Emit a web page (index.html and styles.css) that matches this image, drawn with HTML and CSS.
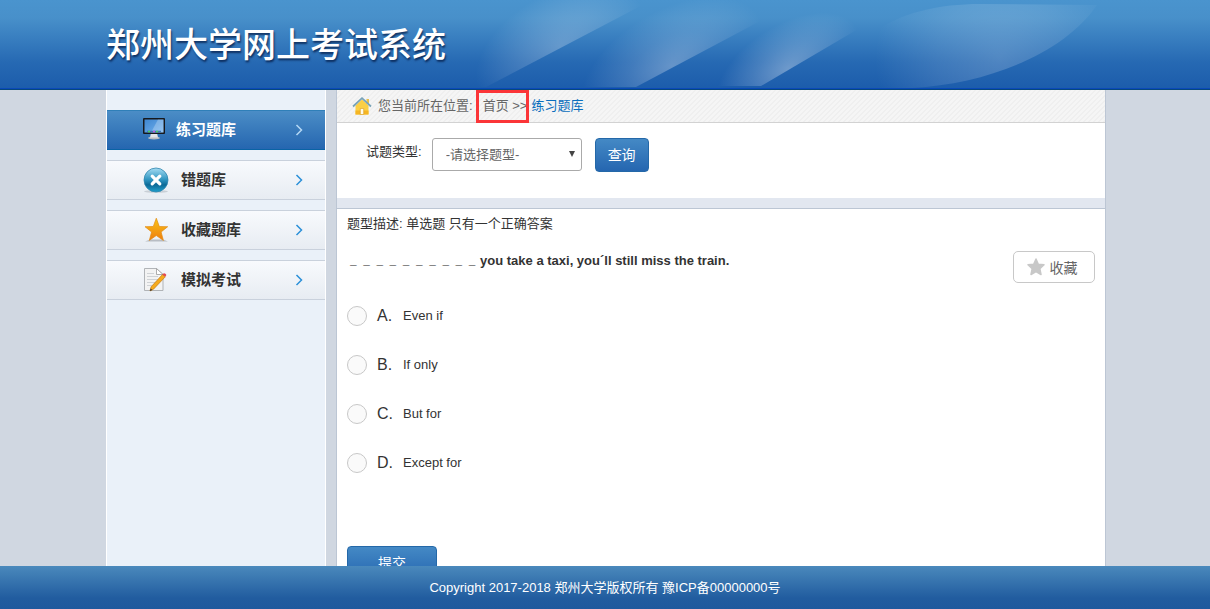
FILE: index.html
```
<!DOCTYPE html>
<html lang="zh-CN">
<head>
  <meta charset="UTF-8">
  <meta name="viewport" content="width=device-width, initial-scale=1.0">
  <title>郑州大学网上考试系统</title>
  <link rel="stylesheet" href="styles.css">
</head>
<body>
  <header class="header">
    <div class="wrap header-inner">
      <h1 class="title">郑州大学网上考试系统</h1>
      <svg class="header-art" width="640" height="88" viewBox="470 0 640 88" aria-hidden="true">
        <defs>
          <radialGradient id="beam1" gradientUnits="userSpaceOnUse" cx="0" cy="0" r="1" gradientTransform="translate(560 47) rotate(-30) scale(92 54)">
            <stop offset="0" stop-color="#fff" stop-opacity=".25"/>
            <stop offset=".5" stop-color="#fff" stop-opacity=".13"/>
            <stop offset="1" stop-color="#fff" stop-opacity="0"/>
          </radialGradient>
          <radialGradient id="beam2" gradientUnits="userSpaceOnUse" cx="0" cy="0" r="1" gradientTransform="translate(672 66) rotate(-30) scale(100 56)">
            <stop offset="0" stop-color="#fff" stop-opacity=".3"/>
            <stop offset=".5" stop-color="#fff" stop-opacity=".13"/>
            <stop offset="1" stop-color="#fff" stop-opacity="0"/>
          </radialGradient>
          <radialGradient id="beam3" gradientUnits="userSpaceOnUse" cx="0" cy="0" r="1" gradientTransform="translate(788 69) rotate(-32) scale(80 44)">
            <stop offset="0" stop-color="#fff" stop-opacity=".34"/>
            <stop offset=".5" stop-color="#fff" stop-opacity=".16"/>
            <stop offset="1" stop-color="#fff" stop-opacity="0"/>
          </radialGradient>
          <radialGradient id="leaf" gradientUnits="userSpaceOnUse" cx="1000" cy="58" r="125">
            <stop offset="0" stop-color="#fff" stop-opacity=".19"/>
            <stop offset=".5" stop-color="#fff" stop-opacity=".11"/>
            <stop offset="1" stop-color="#fff" stop-opacity="0"/>
          </radialGradient>
        </defs>
        <path fill="url(#beam1)" d="M470 87H486L652 0H470z"/>
        <path fill="url(#beam2)" d="M580 87H636L800 0H580z"/>
        <path fill="url(#beam3)" d="M715 86H761L904 2H715z"/>
        <path fill="url(#leaf)" d="M870 35C900 12 940 4 980 4L1097 5C1065 52 990 84 912 88H870z"/>
      </svg>
    </div>
  </header>

  <main class="main">
    <div class="wrap columns">
      <nav class="sidebar">
        <a class="menu-item active" href="#">
          <svg class="menu-icon" width="26" height="26" viewBox="0 0 26 26" aria-hidden="true">
            <defs>
              <linearGradient id="screen" x1="0" y1="0" x2="1" y2="1">
                <stop offset="0" stop-color="#3f86d0"/>
                <stop offset="1" stop-color="#72b2ef"/>
              </linearGradient>
            </defs>
            <ellipse cx="13" cy="21" rx="6" ry="1.400" fill="#b9bdc2"/>
            <path fill="#e3e5e8" d="M10 16h6l1 4.500H9z"/>
            <rect x="2" y="1" width="22" height="16" rx="1" fill="#17191d"/>
            <rect x="3.500" y="2.500" width="19" height="13" fill="url(#screen)"/>
            <path fill="#fff" opacity=".25" d="M17 2.500h5.500v13H10z"/>
            <path stroke="#3f78b8" stroke-width="1.500" d="M6 14.500h14"/>
            <path stroke="#4dd15c" stroke-width="1.500" d="M7 14.500h2m6 0h2"/>
            <path stroke="#c35bdc" stroke-width="1.500" d="M12 14.500h2"/>
          </svg>
          <span class="menu-text">练习题库</span>
          <svg class="menu-arrow" width="8" height="12" viewBox="0 0 8 12" aria-hidden="true"><path d="M1.500 1L6.500 6l-5 5"/></svg>
        </a>
        <a class="menu-item" href="#">
          <svg class="menu-icon" width="26" height="26" viewBox="0 0 26 26" aria-hidden="true">
            <defs>
              <linearGradient id="ball" x1="0" y1="0" x2="0" y2="1">
                <stop offset="0" stop-color="#a5dcf3"/>
                <stop offset=".5" stop-color="#2c93bf"/>
                <stop offset=".7" stop-color="#0d6a97"/>
                <stop offset="1" stop-color="#1fa0cd"/>
              </linearGradient>
            </defs>
            <ellipse cx="13" cy="24.500" rx="12" ry="1.300" fill="#c9cfd6"/>
            <circle cx="13" cy="13" r="12" fill="url(#ball)" stroke="#3187ae" stroke-width=".8"/>
            <path stroke="#fff" stroke-width="3.200" stroke-linecap="round" d="M9.200 9.200l7.600 7.600m0-7.600l-7.600 7.600"/>
          </svg>
          <span class="menu-text">错题库</span>
          <svg class="menu-arrow" width="8" height="12" viewBox="0 0 8 12" aria-hidden="true"><path d="M1.500 1L6.500 6l-5 5"/></svg>
        </a>
        <a class="menu-item" href="#">
          <svg class="menu-icon" width="26" height="26" viewBox="0 0 26 26" aria-hidden="true">
            <defs>
              <linearGradient id="gold" x1="0" y1="0" x2="0" y2="1">
                <stop offset="0" stop-color="#f9c416"/>
                <stop offset="1" stop-color="#ee7d10"/>
              </linearGradient>
            </defs>
            <path fill="#b8bdc4" d="M2 24.500l5-2h13l5 2z"/>
            <path fill="url(#gold)" stroke="#e28b12" stroke-width=".7" stroke-linejoin="round" d="M13.300 1.200l3 8.300 8.400.2-6.600 5.300 2.300 8.400-7.100-4.900-7 4.900 2.300-8.400L2 9.700l8.300-.2z"/>
          </svg>
          <span class="menu-text">收藏题库</span>
          <svg class="menu-arrow" width="8" height="12" viewBox="0 0 8 12" aria-hidden="true"><path d="M1.500 1L6.500 6l-5 5"/></svg>
        </a>
        <a class="menu-item" href="#">
          <svg class="menu-icon" width="26" height="26" viewBox="0 0 26 26" aria-hidden="true">
            <path fill="#f3f3f3" stroke="#a9adb0" stroke-width=".9" d="M1.500 1.500h12l6.500 6v16h-18.500z"/>
            <path fill="#fff" stroke="#999" stroke-width=".8" d="M13.500 1.500v6H20z"/>
            <path stroke="#cfd2d5" d="M4 6.500h7M4 9.500h11M4 12.500h11M4 15.500h8M4 18.500h5"/>
            <path fill="#f6ab1d" stroke="#b76c0b" stroke-width=".6" d="M19.500 7.500l2.800 2.300L10.500 22.200l-3.500 1.800 1.100-4.200z"/>
            <path fill="#e4474f" d="M19.500 7.500l1.300-1.200q1.800-.2 2.600 1.800l-1.100 1.700z"/>
            <path fill="#333" d="M7.700 21.500l1.500 1.400-2.300 1.200z"/>
          </svg>
          <span class="menu-text">模拟考试</span>
          <svg class="menu-arrow" width="8" height="12" viewBox="0 0 8 12" aria-hidden="true"><path d="M1.500 1L6.500 6l-5 5"/></svg>
        </a>
      </nav>

      <section class="content">
        <div class="crumbs">
          <svg class="home-icon" width="20" height="18" viewBox="0 0 20 18" aria-hidden="true">
            <path fill="#e9c04a" d="M14.500 2h2.500v5h-2.500z"/>
            <path fill="#fbcf45" d="M3.500 8.500L10 2.500l6.500 6v9h-13z"/>
            <path fill="#f5b523" d="M3.500 13.500h13v4h-13z"/>
            <path fill="#fffbe8" stroke="#d99a1c" stroke-width=".6" d="M8.300 11.500h3.400v6H8.300z"/>
            <path fill="none" stroke="#78a3b8" stroke-width="1.800" d="M1 9.500l9-8.300 9 8.300"/>
          </svg>
          <span class="crumbs-label">您当前所在位置:</span>
          <span class="marked"><a href="#">首页</a> &gt;&gt;</span>
          <a class="current" href="#">练习题库</a>
        </div>

        <form class="filter">
          <label for="type">试题类型:</label>
          <select class="type-select" id="type">
            <option>-请选择题型-</option>
          </select>
          <button class="btn" type="button">查询</button>
        </form>

        <form class="question">
          <p class="desc">题型描述: 单选题 只有一个正确答案</p>
          <div class="stem">
            <p class="stem-text"><span class="blank">_ _ _ _ _ _ _ _ _ _</span> you take a taxi, you´ll still miss the train.</p>
            <button class="fav" type="button">
              <svg width="18" height="18" viewBox="0 0 18 18" aria-hidden="true"><path fill="#c8c8c8" stroke="#c8c8c8" stroke-width="1.500" stroke-linejoin="round" d="M9 1l2.300 5.200 5.700.6-4.200 3.900 1.200 5.800L9 13.700l-5 2.800 1.200-5.800L1 6.800l5.700-.6z"/></svg>
              收藏
            </button>
          </div>
          <div class="options">
            <label class="option"><input type="radio" name="answer"><span class="letter">A.</span><span>Even if</span></label>
            <label class="option"><input type="radio" name="answer"><span class="letter">B.</span><span>If only</span></label>
            <label class="option"><input type="radio" name="answer"><span class="letter">C.</span><span>But for</span></label>
            <label class="option"><input type="radio" name="answer"><span class="letter">D.</span><span>Except for</span></label>
          </div>
          <button class="btn submit" type="button">提交</button>
        </form>
      </section>
    </div>
  </main>

  <footer class="footer">Copyright 2017-2018 郑州大学版权所有 豫ICP备00000000号</footer>
</body>
</html>
```

FILE: styles.css
```
* {
  box-sizing: border-box;
}

body {
  margin: 0;
  height: 100vh;
  display: flex;
  flex-direction: column;
  background: #d0d7e1;
  color: #333;
  font: 13px/20px "Liberation Sans", "Noto Sans CJK SC", sans-serif;
}

a {
  color: inherit;
  text-decoration: none;
}

button,
select {
  font-family: inherit;
}

.wrap {
  width: 100%;
  max-width: 1002px;
  margin: 0 auto;
  padding-left: 2px;
}

/* header */
.header {
  flex: none;
  height: 90px;
  background: linear-gradient(#4a94ce, #4890ca 20%, #2669b3 70%, #1c5cab);
  border-bottom: 1px solid #06477c;
  box-shadow: inset 0 -1px #0a49b8;
}

.header-inner {
  position: relative;
}

.header-art {
  position: absolute;
  top: 0;
  right: -4px;
}

.title {
  margin: 0;
  color: #fff;
  font-size: 34px;
  line-height: 90px;
  font-weight: 500;
  text-shadow: 1px 2px 2px rgba(0, 20, 60, 0.7);
}

/* page columns */
.main {
  flex: 1;
  min-height: 0;
  overflow: hidden;
}

.columns {
  display: flex;
  gap: 10px;
  min-height: 100%;
}

.sidebar {
  flex: none;
  width: 220px;
  padding-top: 20px;
  background: #eaf1f9;
  border: solid #fff;
  border-width: 0 1px;
}

.menu-item {
  display: flex;
  align-items: center;
  height: 40px;
  margin-bottom: 10px;
  padding: 0 22px 0 36px;
  border: solid #c9d1dc;
  border-width: 1px 0;
  background: linear-gradient(#f8fafd, #e7ecf2);
  font-size: 15px;
  font-weight: bold;
}

.menu-item.active {
  padding-left: 34px;
  color: #fff;
  background: linear-gradient(#4b8dc6, #2566b0);
  border-color: #2f7fb8 #2f7fb8 #0a63a5;
}

.menu-text {
  flex: 1;
  margin-left: 12px;
}

.active .menu-text {
  margin-left: 9px;
}

.menu-arrow {
  fill: none;
  stroke: #2a90d8;
  stroke-width: 1.5;
}

.active .menu-arrow {
  stroke: #b5d8f5;
}

.content {
  flex: 1;
  min-width: 0;
  background: #fff;
  border: solid #bcc6d4;
  border-width: 0 1px;
}

.crumbs {
  display: flex;
  align-items: center;
  height: 33px;
  padding-left: 15px;
  border-bottom: 1px solid #d2d2d2;
  background: linear-gradient(135deg, #f5f5f5 25%, #efefef 25% 50%, #f5f5f5 50% 75%, #efefef 75%) 0 0 / 5px 5px;
  color: #666;
}

.crumbs-label {
  margin: 0 10px 0 6px;
}

.marked {
  position: relative;
  margin-right: 4px;
}

.marked::after {
  content: "";
  position: absolute;
  inset: -6px -2px -7px -7px;
  border: 3px solid #fb3538;
}

.current {
  color: #0a6ebd;
}

/* filter */
.filter {
  display: flex;
  align-items: flex-start;
  height: 86px;
  padding: 15px 0 0 29px;
  border-bottom: 1px solid #bcc6d4;
  background: linear-gradient(to top, #e2e7f0 10px, #fff 10px);
}

.filter label {
  margin: 4px 10px 0 0;
}

.type-select {
  appearance: none;
  width: 150px;
  height: 33px;
  margin-right: 13px;
  padding: 0 13px;
  border: 1px solid #aaa;
  border-radius: 3px;
  background: #fff url("data:image/svg+xml,%3Csvg xmlns='http://www.w3.org/2000/svg' width='6' height='6'%3E%3Cpath fill='%23444' d='M0 0h6L3 6z'/%3E%3C/svg%3E") no-repeat right 6px top 12px;
  color: #666;
  font-size: 13px;
}

.btn {
  height: 34px;
  padding: 0 12px;
  border: 1px solid #2468a8;
  border-radius: 4px;
  background: linear-gradient(#4489c5, #2566b0);
  color: #fff;
  font-size: 14px;
  line-height: 30px;
}

/* question */
.question {
  padding: 5px 10px 20px;
}

.desc {
  margin: 0;
}

.stem {
  display: flex;
  justify-content: space-between;
  align-items: flex-start;
  margin-top: 17px;
}

.stem-text {
  margin: 0 0 0 3px;
  font-weight: bold;
}

.blank {
  margin-right: 1px;
  font: 11px "Liberation Mono", monospace;
}

.fav {
  display: flex;
  align-items: center;
  justify-content: center;
  gap: 5px;
  width: 82px;
  height: 32px;
  padding: 0 4px 0 0;
  border: 1px solid #c8c8c8;
  border-radius: 5px;
  background: #fff;
  color: #666;
  font-size: 14px;
}

.options {
  display: flex;
  flex-direction: column;
  gap: 29px;
  margin-top: 23px;
}

.option {
  display: flex;
  height: 20px;
}

.option input {
  appearance: none;
  width: 20px;
  height: 20px;
  margin: 0 10px 0 0;
  border: 1px solid #c8c8c8;
  border-radius: 50%;
  background: #fafafa;
}

.option input:checked {
  background: radial-gradient(#2566b0 5px, #fafafa 6px);
}

.letter {
  width: 26px;
  font-size: 16px;
}

.submit {
  width: 90px;
  margin-top: 73px;
}

.footer {
  flex: none;
  height: 43px;
  line-height: 44px;
  text-align: center;
  color: #fff;
  background: linear-gradient(#4a89bc, #215c9f 75%, #1f599d);
}
```
